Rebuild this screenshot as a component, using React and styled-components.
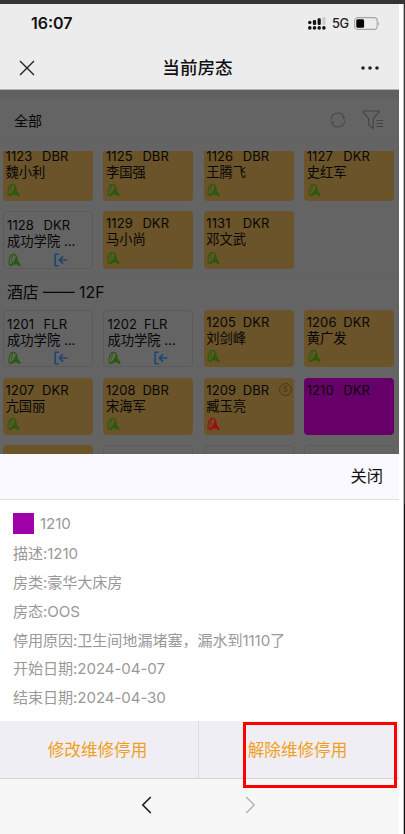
import styled, { createGlobalStyle } from 'styled-components';

const ROOMS_11F = [
    { no: '1123', type: 'DBR', guest: '魏小利' },
    { no: '1125', type: 'DBR', guest: '李国强' },
    { no: '1126', type: 'DBR', guest: '王腾飞' },
    { no: '1127', type: 'DKR', guest: '史红军' },
    { no: '1128', type: 'DKR', guest: '成功学院 ...', status: 'leaving' },
    { no: '1129', type: 'DKR', guest: '马小尚' },
    { no: '1131', type: 'DKR', guest: '邓文武' },
];

const ROOMS_12F = [
    { no: '1201', type: 'FLR', guest: '成功学院 ...', status: 'leaving' },
    { no: '1202', type: 'FLR', guest: '成功学院 ...', status: 'leaving' },
    { no: '1205', type: 'DKR', guest: '刘剑峰' },
    { no: '1206', type: 'DKR', guest: '黄广发' },
    { no: '1207', type: 'DKR', guest: '亢国丽' },
    { no: '1208', type: 'DBR', guest: '宋海军' },
    { no: '1209', type: 'DBR', guest: '臧玉亮', alert: true, owes: true },
    { no: '1210', type: 'DKR', status: 'oos' },
    { status: 'occupied' },
    { status: 'leaving' },
    { status: 'leaving' },
    { status: 'leaving' },
];

const DETAILS = [
    '描述:1210',
    '房类:豪华大床房',
    '房态:OOS',
    '停用原因:卫生间地漏堵塞，漏水到1110了',
    '开始日期:2024-04-07',
    '结束日期:2024-04-30',
];

const TILE_COLORS = {
    occupied: '#6b5429',
    leaving: '#646464',
    oos: '#660068',
};

const GuestIcon = ({ color }) => (
    <svg width="13" height="14" viewBox="0 0 13 14" fill="none" stroke={color}>
        <path d="M1.1 12.4V8.5C1.1 4 3 1.3 5.4 1.3C7.6 1.3 8.6 3 8.6 5.5" strokeWidth="1.2" />
        <path d="M4.8 2.4C3.8 4.5 3.6 6.5 3.5 8.5" strokeWidth="1" />
        <path d="M7.6 4.4L9.2 4.2L9.8 8L12.2 11V12.9H10.6L9.8 11.4H5.4L4.2 12.9H2.2V11.5L5.6 8.8Z" fill={color} strokeWidth="0.2" />
    </svg>
);

const LeaveIcon = () => (
    <svg width="14" height="14" viewBox="0 0 14 14" fill="none" stroke="#1d4577" strokeWidth="1.6">
        <path d="M4.6 1.2H1.2V12.8H4.6" />
        <path d="M13.4 7H5.6M9 3.4L5.4 7L9 10.6" />
    </svg>
);

const SignalIcon = () => (
    <svg width="18" height="13" viewBox="0 0 18 13" fill="#111">
        {[1.8, 6.5, 11.2, 15.9].map(x => <circle key={x} cx={x} cy="10.9" r="1.8" />)}
        <circle cx="1.8" cy="5.5" r="1.7" />
        <rect x="4.9" y="3" width="3.2" height="5" rx="1.2" />
        <rect x="9.6" y="1.3" width="3.2" height="6.7" rx="1.2" />
        <rect x="14.3" y="0" width="3.2" height="8" rx="1" fill="#ccc" />
    </svg>
);

const BatteryIcon = () => (
    <svg width="26" height="13" viewBox="0 0 26 13">
        <rect x="0.6" y="0.6" width="22.6" height="11.8" rx="3.2" fill="none" stroke="#a5a5a5" strokeWidth="1.1" />
        <rect x="2.3" y="2.2" width="7.8" height="8.6" rx="1.5" fill="#000" />
        <path d="M24.3 4.5Q26 6.5 24.3 8.5Z" fill="#999" />
    </svg>
);

const RoomTile = ({ no, type, guest, status = 'occupied', alert, owes }) => (
    <Tile $status={status}>
        {no && (
            <Code>
                <RoomNo>{no}</RoomNo>
                <span>{type}</span>
            </Code>
        )}
        {guest && <Guest>{guest}</Guest>}
        {guest && (
            <TileIcons>
                <GuestIcon color={alert ? '#a00d10' : '#285c0c'} />
                {status === 'leaving' && <LeaveIcon />}
            </TileIcons>
        )}
        {owes && <Coin>$</Coin>}
    </Tile>
);

export const App = () => {
    return (
        <>
            <GlobalStyle />
            <Frame>
                <Screen>
                    <StatusBar>
                        <Clock>16:07</Clock>
                        <SignalIcon />
                        <Network>5G</Network>
                        <BatteryIcon />
                    </StatusBar>
                    <TitleBar>
                        <svg width="16" height="16" viewBox="0 0 16 16" stroke="#222" strokeWidth="1.4">
                            <path d="M1 1L15 15M15 1L1 15" />
                        </svg>
                        <Title>当前房态</Title>
                        <svg width="20" height="6" viewBox="0 0 20 6" fill="#222">
                            <circle cx="3" cy="3" r="1.8" />
                            <circle cx="10" cy="3" r="1.8" />
                            <circle cx="17" cy="3" r="1.8" />
                        </svg>
                    </TitleBar>
                    <Rooms>
                        <FilterBar>
                            <span>全部</span>
                            <FilterIcons>
                                <svg width="16" height="16" viewBox="0 0 16 16" fill="none" stroke="#484848" strokeWidth="1.1">
                                    <path d="M1.2 7.2A6.8 6.8 0 0 1 13.8 4.3L14.3 6.2L12 5.4" />
                                    <path d="M14.8 8.8A6.8 6.8 0 0 1 2.2 11.7L1.7 9.8L4 10.6" />
                                </svg>
                                <svg width="22" height="20" viewBox="0 0 22 20" fill="none" stroke="#444" strokeWidth="1.2">
                                    <path d="M1.5 1H16.5Q17.4 1 16.8 2.2L11.2 8.7V18.2L6.8 15V8.7L1.2 2.2Q.6 1 1.5 1Z" />
                                    <path d="M14.5 10.5H21M14.5 13.5H21M14.5 16.5H21" />
                                </svg>
                            </FilterIcons>
                        </FilterBar>
                        <RoomList>
                            <Grid $cut>
                                {ROOMS_11F.map(room => <RoomTile key={room.no} {...room} />)}
                            </Grid>
                            <Floor>酒店 —— 12F</Floor>
                            <Grid>
                                {ROOMS_12F.map((room, i) => <RoomTile key={i} {...room} />)}
                            </Grid>
                        </RoomList>
                    </Rooms>
                    <SheetHeader>关闭</SheetHeader>
                    <SheetBody>
                        <Detail>
                            <Swatch />
                            1210
                        </Detail>
                        {DETAILS.map(text => <Detail key={text}>{text}</Detail>)}
                    </SheetBody>
                    <Actions>
                        <Action>修改维修停用</Action>
                        <Action>
                            解除维修停用
                            <Highlight />
                        </Action>
                    </Actions>
                    <NavBar>
                        <svg width="11" height="18" viewBox="0 0 11 18" fill="none" stroke="#222" strokeWidth="1.7">
                            <path d="M9.8 1L1.8 9L9.8 17" />
                        </svg>
                        <svg width="11" height="18" viewBox="0 0 11 18" fill="none" stroke="#b5b5b5" strokeWidth="1.5">
                            <path d="M1.2 1L9.2 9L1.2 17" />
                        </svg>
                    </NavBar>
                </Screen>
                <Edge />
            </Frame>
        </>
    );
};

const GlobalStyle = createGlobalStyle`
  body {
    margin: 0;
    background: #fff;
    font-family: Inter, 'Noto Sans CJK SC', sans-serif;
  }

  * {
    box-sizing: border-box;
  }

  svg {
    display: block;
    flex-shrink: 0;
  }
`;

const Frame = styled.div`
  display: flex;
  width: 405px;
  height: 834px;
  overflow: hidden;
  border-top: 4px solid #343434;
`;

const Screen = styled.div`
  display: flex;
  flex-direction: column;
  width: 399px;
  height: 830px;
`;

const Edge = styled.div`
  width: 2px;
  margin-left: auto;
  border-left: 1px solid #bbb;
  background: linear-gradient(#343434 500px, #111 500px);
`;

const StatusBar = styled.div`
  display: flex;
  align-items: center;
  height: 38px;
  padding: 0 19px 0 31px;
  background: #ececec;
`;

const Clock = styled.span`
  margin-right: auto;
  font-size: 16px;
  font-weight: 600;
  color: #111;
`;

const Network = styled.span`
  width: 17px;
  margin: 0 5px 0 6px;
  font-size: 12.8px;
  font-weight: 500;
  letter-spacing: -0.3px;
  color: #222;
`;

const TitleBar = styled.div`
  display: flex;
  align-items: center;
  justify-content: space-between;
  height: 48px;
  padding: 4px 19px 0 19px;
  border-bottom: 1px solid #b5b5b5;
  background: #ececec;
`;

const Title = styled.span`
  font-size: 17.6px;
  font-weight: 500;
  line-height: 24px;
  color: #111;
`;

const Rooms = styled.div`
  display: flex;
  flex-direction: column;
  height: 363.5px;
  border-top: 9px solid #606060;
  background: #646464;
  color: #070707;
`;

const FilterBar = styled.div`
  display: flex;
  flex-shrink: 0;
  align-items: center;
  justify-content: space-between;
  height: 42px;
  padding: 0 15px 0 14px;
  border-bottom: 1px solid #606060;
  font-size: 14px;
`;

const FilterIcons = styled.div`
  display: flex;
  align-items: center;
  gap: 16px;
`;

const RoomList = styled.div`
  flex: 1;
  min-height: 0;
  margin-top: 10px;
  overflow: hidden;
`;

const Grid = styled.div`
  display: grid;
  grid-template-columns: repeat(4, 90px);
  grid-auto-rows: 57.5px;
  gap: 10.2px 10.4px;
  padding: 0 3px;
  margin-top: ${props => (props.$cut ? '-7.5px' : '0')};
`;

const Tile = styled.div`
  position: relative;
  padding: ${props => (props.$status === 'leaving' ? '5px 3px 0' : '4px 2.5px 0')};
  border: ${props => (props.$status === 'leaving' ? '1px solid #5b5b5b' : 'none')};
  border-radius: 4px;
  background: ${props => TILE_COLORS[props.$status]};
`;

const Code = styled.div`
  display: flex;
  height: 16px;
  font-size: 13px;
  line-height: 17px;
  letter-spacing: 0.1px;
`;

const RoomNo = styled.span`
  width: 36.5px;
`;

const Guest = styled.div`
  height: 17px;
  font-size: 13.3px;
  line-height: 17px;
  white-space: nowrap;
`;

const TileIcons = styled.div`
  display: flex;
  gap: 32.5px;
  margin: 2.5px 0 0 1px;
`;

const Coin = styled.span`
  position: absolute;
  top: 5px;
  right: 2px;
  width: 13px;
  height: 13px;
  border: 1px solid #493817;
  border-radius: 50%;
  font-size: 8px;
  line-height: 11px;
  text-align: center;
  color: #493817;
`;

const Floor = styled.div`
  height: 35px;
  margin-top: 6.3px;
  padding-left: 7px;
  border-top: 1px solid #606060;
  font-size: 15.8px;
  line-height: 33px;
`;

const SheetHeader = styled.div`
  height: 46px;
  padding-right: 16px;
  border-bottom: 1px solid #dedde5;
  background: #faf9ff;
  font-size: 16.3px;
  line-height: 45px;
  text-align: right;
  color: #111;
`;

const SheetBody = styled.div`
  height: 221.5px;
  padding: 9.5px 13px;
  background: #fff;
`;

const Detail = styled.div`
  display: flex;
  align-items: center;
  height: 28.8px;
  font-size: 15.1px;
  letter-spacing: -0.08px;
  white-space: nowrap;
  color: #999;
`;

const Swatch = styled.span`
  width: 21px;
  height: 21px;
  margin-right: 6px;
  background: #a000a8;
`;

const Actions = styled.div`
  display: flex;
  height: 58px;
  border-bottom: 1px solid #d5d5d9;
  background: #efeef4;
`;

const Action = styled.div`
  position: relative;
  width: 198px;
  padding-right: 3px;
  font-size: 16.6px;
  line-height: 58px;
  text-align: center;
  color: #f0a020;

  & + & {
    width: 201px;
    border-left: 1px solid #dcdce2;
  }
`;

const Highlight = styled.div`
  position: absolute;
  top: 1px;
  right: 2px;
  width: 154px;
  height: 66px;
  border: 3px solid #fe0000;
`;

const NavBar = styled.div`
  display: flex;
  flex: 1;
  justify-content: center;
  gap: 93px;
  padding: 17px 3px 0 0;
  background: #f7f7f7;
`;

export default App;
